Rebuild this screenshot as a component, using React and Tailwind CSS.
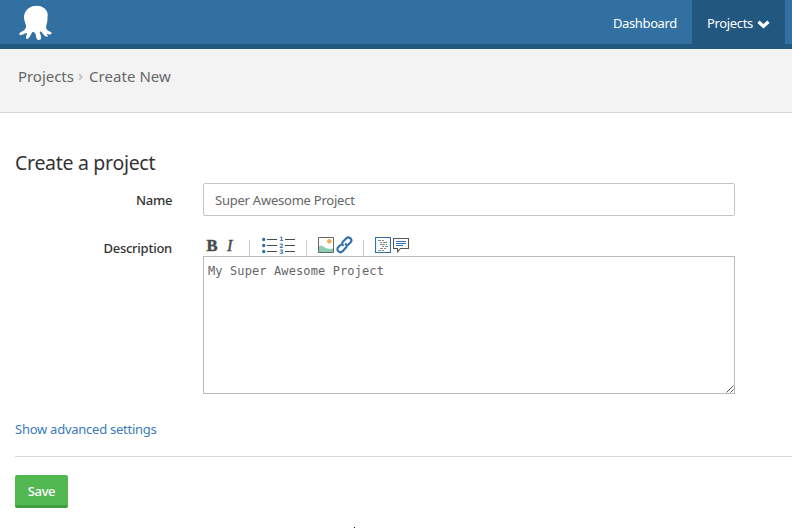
const ink = "#4a4a4a";
const blue = "#2f6fae";

function Octopus() {
  return (
    <svg className="ml-[19px] mt-[5px] h-[36px] w-[34px]" viewBox="0 0 34 36" fill="#fff">
      <path d="M17.500 .8C10.500 .8 5 5.700 5 12.300c0 3.200 1.300 5.300 1.900 7.700.7 3-1 5-3.300 6.200C2 27 .3 27.600.3 28.900c0 1.300 2.200 1.200 3.700.7 1.400-.4 2.600-1.500 3.700-1.500.7.8-.3 2.300-.6 3.500-.4 1.500.1 2.600 1.400 2.300 2.200-.6 3.300-4.800 5-6.900 1.100-.3 2 .3 2.700 1.400 1 2 .8 6.400 3.500 6.600 2.900.2 2.600-2.500 2.100-4.400-.4-1.800-1.600-3.300-.9-4 .9-.5 2.100.7 3.200 2.300 1.300 1.800 3.200 3.500 4.500 2.600 1-.8-.8-2.400-1.400-3.300 1.500.9 3.900 1.800 5.100.8.900-1-.2-2-1.500-2.500-3-1.200-4.500-3.200-3.300-6.700.7-2.200 1-4.200 1-7.500C30.100 5.700 24.500.8 17.500.8Z" />
    </svg>
  );
}

function Divider() {
  return <span className="h-4 w-px shrink-0 bg-[#ccc]" />;
}

function Toolbar() {
  return (
    <div className="flex h-[20px] items-start pl-[3px]">
      <svg className="h-[20px] w-[13px]" viewBox="0 0 13 20" fill={ink}>
        <text x=".6" y="14.700" fontFamily="Liberation Serif" fontWeight="bold" fontSize="16.500" stroke={ink} strokeWidth=".5">B</text>
      </svg>
      <svg className="ml-[6px] h-[20px] w-[12px]" viewBox="0 0 12 20" fill={ink}>
        <text x="2" y="14.700" fontFamily="Liberation Serif" fontStyle="italic" fontSize="16.500" stroke={ink} strokeWidth=".4">I</text>
      </svg>
      <div className="ml-[12px] mt-[4px] flex"><Divider /></div>
      <svg className="ml-[12px] h-[19px] w-[34px]" viewBox="0 0 34 19" fill="none">
        <path d="M5 3.500h10M5 9.500h10M5 15.500h10M23 3.500h10M23 9.500h10M23 15.500h10" stroke={ink} strokeWidth="1.200" />
        <g fill={blue}><circle cx="1.700" cy="3.500" r="1.700" /><circle cx="1.700" cy="9.500" r="1.700" /><circle cx="1.700" cy="15.500" r="1.700" /></g>
        <g fill={blue} fontFamily="DejaVu Sans" fontWeight="bold" fontSize="6">
          <text x="17.300" y="5.200">1</text>
          <text x="17.300" y="11.500">2</text>
          <text x="17.300" y="17.500">3</text>
        </g>
      </svg>
      <div className="ml-[10px] mt-[4px] flex"><Divider /></div>
      <svg className="ml-[11px] h-[18px] w-[16px]" viewBox="0 0 16 18" fill="none">
        <path d="M1 10c4-.8 5 1.500 8 2.500 2.500.7 3.500.3 6 0V16H1z" fill="#8bceb0" />
        <circle cx="11.300" cy="5.300" r="2.300" fill="#edb052" />
        <path d="M.5 1.500h15v15H.5z" stroke="#666" />
      </svg>
      <svg className="ml-[2px] h-[18px] w-[17px]" viewBox="0 0 17 18" fill="none" stroke={blue} strokeWidth="2.100" strokeLinecap="round">
        <path d="M7 9.200c-1.200-1-1-2.600.1-3.700l3-3c1.200-1.200 3-1.300 4.300-.2 1.200 1.200 1.200 3 0 4.200l-2.300 2.300M9.700 8.100c1.300 1 1.200 2.600.1 3.700l-3.200 3.400c-1.200 1.200-3 1.300-4.300.1-1.200-1.200-1.200-3 0-4.200l2.200-2.200" />
      </svg>
      <div className="ml-[10px] mt-[4px] flex"><Divider /></div>
      <svg className="ml-[11px] h-[18px] w-[16px]" viewBox="0 0 16 18" fill="none">
        <path d="M.5 1.500h15v15H.5z" stroke={blue} strokeWidth="1.200" />
        <path d="M3 4.500h3M7 4.500h2M5 6.500h2M8 6.500h4M5 8.500h5M11 8.500h1M7 10.500h2M10 10.500h3M5 12.500h3M9 12.500h2M3 14.500h3M7 14.500h2" stroke="#777" strokeWidth=".9" />
      </svg>
      <svg className="ml-[2px] h-[18px] w-[17px]" viewBox="0 0 17 18" fill="none">
        <path d="M.5 2.500h15v10h-8L4.500 15.800v-3.300h-4z" stroke="#555" strokeWidth="1.100" />
        <path d="M3 5.500h10M3 7.500h10M3 9.500h7" stroke={blue} />
      </svg>
    </div>
  );
}

export default function App() {
  return (
    <div className="flex h-[528px] w-[792px] flex-col overflow-hidden bg-white font-['Noto_Sans','Open_Sans',sans-serif] text-[13px] text-[#333]">
      <header className="flex h-[49px] shrink-0 border-b-[5px] border-[#22577f] bg-[#3270a2] text-white">
        <Octopus />
        <nav className="ml-auto flex h-[44px] whitespace-nowrap">
          <a className="w-[79px] pt-[13px] leading-[20px] tracking-[-0.38px]">Dashboard</a>
          <a className="flex w-[93px] bg-[#22577f] pl-[15px] pt-[13px] leading-[20px] tracking-[-0.35px]">
            <span className="w-[50px]">Projects</span>
            <svg className="mt-[7px] h-[9px] w-[13px]" viewBox="0 0 13 9" fill="none">
              <path d="M1.500 1.800 6.500 6.300l5-4.500" stroke="#fff" strokeWidth="3.300" />
            </svg>
          </a>
          <span className="w-[7px]" />
        </nav>
      </header>
      <div className="flex h-[64px] shrink-0 border-b border-[#d5d5d5] bg-[#f3f3f3] pl-[18px] pt-[17px] text-[15px] leading-[20px] text-[#666]">
        <span className="w-[60px] tracking-[-0.05px]">Projects</span>
        <span className="w-[11px] text-[14px] font-bold text-[#c4c4c4]">›</span>
        <span className="tracking-[0.05px]">Create New</span>
      </div>
      <main className="flex flex-col pl-[15px]">
        <h1 className="mt-[36px] h-[34px] text-[19.500px] leading-[28px] tracking-[-0.3px]">Create a project</h1>
        <div className="flex h-[33px]">
          <label className="w-[157px] pt-[7px] text-right font-medium leading-[20px] tracking-[-0.35px]">Name</label>
          <div className="ml-[31px] w-[532px] rounded-[2px] border border-[#c5c5c5] pl-[11px] pt-[6px] leading-[20px] tracking-[-0.23px] text-[#666]">Super Awesome Project</div>
        </div>
        <div className="mt-[20px] flex h-[158px]">
          <label className="w-[157px] pt-[2px] text-right font-medium leading-[20px] tracking-[-0.25px]">Description</label>
          <div className="ml-[31px] w-[532px]">
            <Toolbar />
            <div className="flex h-[138px] justify-between border border-[#bbb] pl-[4px] pt-[5px] font-['DejaVu_Sans_Mono',monospace] text-[12px] leading-[18px] tracking-[0.11px] text-[#666]">
              <span>My Super Awesome Project</span>
              <svg className="h-[8px] w-[8px] self-end" viewBox="0 0 8 8" stroke="#555"><path d="M.5 7.500l7-7M4.500 7.500l3-3" /></svg>
            </div>
          </div>
        </div>
        <a className="mt-[25px] h-[37px] leading-[20px] tracking-[-0.25px] text-[#3a7bb8]">Show advanced settings</a>
        <div className="h-px bg-[#d9d9d9]" />
        <button className="mt-[18px] h-[33px] w-[53px] rounded-[2px] border-b-[3px] border-[#40a040] bg-[#52b852] pt-px font-medium leading-[20px] tracking-[-0.4px] text-white">Save</button>
      </main>
      <div className="ml-[354px] mt-auto h-px w-px bg-black" />
    </div>
  );
}
